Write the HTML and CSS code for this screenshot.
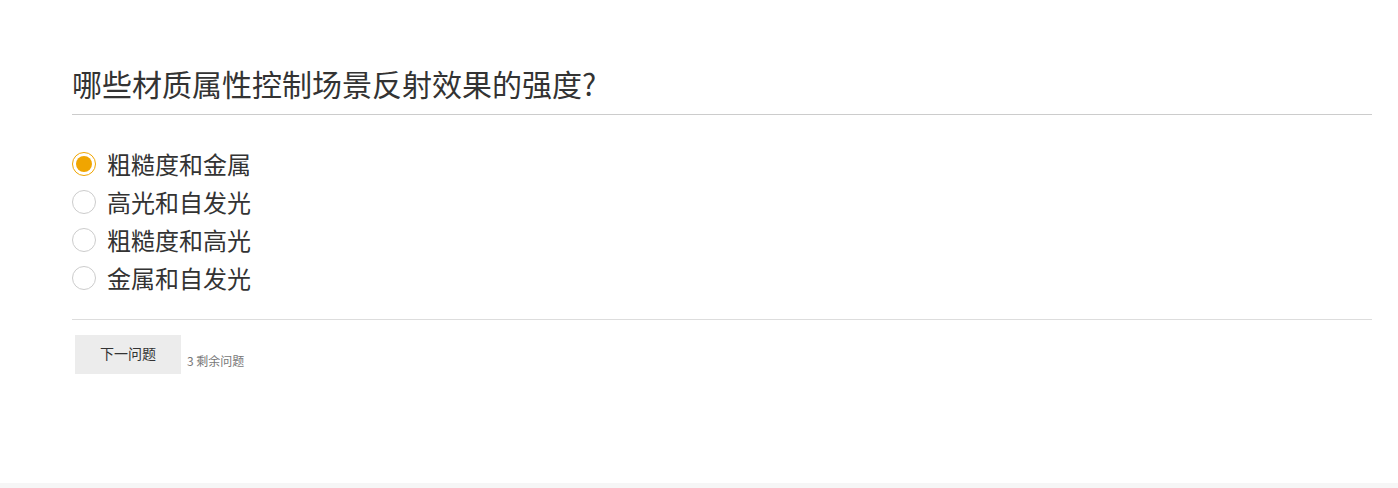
FILE: index.html
```html
<!DOCTYPE html>
<html lang="zh">
<head>
<meta charset="utf-8">
<link rel="stylesheet" href="styles.css">
</head>
<body>
<div class="page">
  <div class="quiz">
    <h1 class="question">哪些材质属性控制场景反射效果的强度?</h1>
    <ul class="options">
      <li class="option"><span class="radio checked"></span><span class="label">粗糙度和金属</span></li>
      <li class="option"><span class="radio"></span><span class="label">高光和自发光</span></li>
      <li class="option"><span class="radio"></span><span class="label">粗糙度和高光</span></li>
      <li class="option"><span class="radio"></span><span class="label">金属和自发光</span></li>
    </ul>
    <div class="actions">
      <button class="next">下一问题</button>
      <span class="remaining">3 剩余问题</span>
    </div>
  </div>
  <div class="footer"></div>
</div>
</body>
</html>
```

FILE: styles.css
```css
html, body {
  margin: 0;
  padding: 0;
  background: #fff;
}
body {
  font-family: "Noto Sans CJK SC", "Open Sans", sans-serif;
  color: #333;
}
.page {
  height: 488px;
  display: flex;
  flex-direction: column;
}
.quiz {
  flex: 1;
  width: 1300px;
  margin-left: 72px;
  padding-top: 62px;
}
.question {
  margin: 0;
  font-size: 30px;
  font-weight: 400;
  line-height: 42px;
  padding-bottom: 10px;
  border-bottom: 1px solid #cccccc;
  color: #333;
}
.options {
  list-style: none;
  margin: 0;
  padding: 30px 0 22px;
  border-bottom: 1px solid #dddddd;
}
.option {
  display: flex;
  align-items: center;
  height: 38px;
}
.radio {
  box-sizing: border-box;
  width: 24px;
  height: 24px;
  border-radius: 50%;
  border: 1px solid #cccccc;
  margin-right: 11px;
  background: #fff;
  position: relative;
}
.radio.checked {
  border-color: #f0a500;
}
.radio.checked::after {
  content: "";
  position: absolute;
  left: 3px;
  top: 3px;
  width: 16px;
  height: 16px;
  border-radius: 50%;
  background: #f0a500;
}
.label {
  font-size: 24px;
  line-height: 38px;
  color: #333;
}
.actions {
  display: flex;
  align-items: flex-end;
  padding-top: 15px;
}
.next {
  margin-left: 3px;
  width: 106px;
  height: 39px;
  background: #ececec;
  border: none;
  font-family: "Noto Sans CJK SC", "Open Sans", sans-serif;
  font-size: 14px;
  color: #333;
  padding: 0 0 4px;
  cursor: pointer;
}
.remaining {
  margin-left: 6px;
  font-size: 12px;
  color: #777;
  line-height: 14px;
  margin-bottom: 6px;
}
.footer {
  height: 5px;
  background: #f6f6f6;
}
```
